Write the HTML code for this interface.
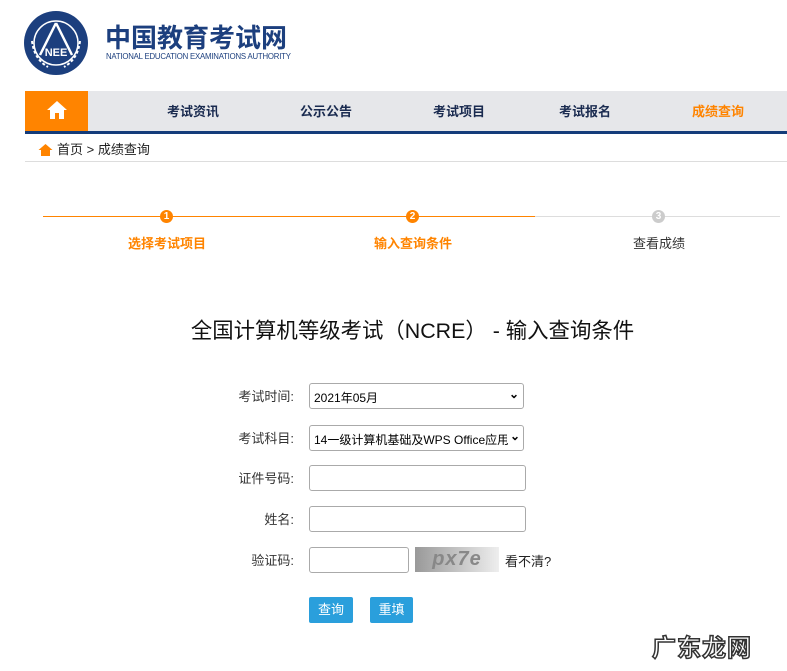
<!DOCTYPE html>
<html><head><meta charset="utf-8"><style>
*{margin:0;padding:0;box-sizing:border-box}
body{width:787px;height:671px;background:#fff;font-family:"Liberation Sans","Noto Sans CJK SC",sans-serif;position:relative;overflow:hidden;color:#333}
.a{position:absolute}
.nav{left:25px;top:91px;width:762px;background:#e6e7ea;border-bottom:3px solid #143c7a;height:43px}
.nav span{position:absolute;top:10px;font-size:13px;font-weight:bold;color:#1a2b50}
.lbl{position:absolute;right:493px;font-size:13px;color:#333}
.box{position:absolute;left:309px;border:1px solid #aaa;border-radius:3px;background:#fff;height:26px}
.sel{font-size:12px;color:#000;padding:5px 4px}
.btn{position:absolute;top:597px;height:26px;background:#2a9fdc;color:#fff;font-size:13px;border-radius:2px;text-align:center;line-height:26px}
</style></head><body>
<svg class="a" style="left:24px;top:11px" width="64" height="64" viewBox="0 0 64 64">
<circle cx="32" cy="32" r="32" fill="#1c3f7e"/>
<circle cx="32" cy="32" r="22" fill="none" stroke="#fff" stroke-width="1.5"/>
<path d="M32 12 L16 44 M32 12 L48 44" stroke="#fff" stroke-width="2.5" fill="none"/>
<text x="32" y="45" font-size="11" fill="#fff" text-anchor="middle" font-family="Liberation Sans" font-weight="bold">NEE</text>
<path d="M8 30 Q10 48 24 56 M56 30 Q54 48 40 56" stroke="#fff" stroke-width="2" fill="none" stroke-dasharray="3 2"/>
</svg>
<div class="a" style="left:105px;top:18px;font-size:26px;font-weight:bold;color:#1c3f7e;letter-spacing:0px">中国教育考试网</div>
<div class="a" style="left:106px;top:52px;font-size:7.8px;color:#1c3f7e;letter-spacing:-0.2px">NATIONAL EDUCATION EXAMINATIONS AUTHORITY</div>
<div class="a nav">
<div class="a" style="left:0;top:0;width:63px;height:40px;background:#ff8400"></div>
<svg class="a" style="left:21px;top:9px" width="22" height="20" viewBox="0 0 22 20"><path d="M11 1 L1 10 H4 V19 H9 V13 H13 V19 H18 V10 H21 Z" fill="#fff"/></svg>
<span style="left:142px">考试资讯</span><span style="left:275px">公示公告</span><span style="left:408px">考试项目</span><span style="left:534px">考试报名</span><span style="left:667px;color:#ff8400">成绩查询</span>
</div>
<svg class="a" style="left:38px;top:143px" width="15" height="14" viewBox="0 0 15 14"><path d="M7.5 1 L0.5 7 H3 V13 H12 V7 H14.5 Z" fill="#ff8400"/></svg>
<div class="a" style="left:57px;top:139px;font-size:13px;color:#222">首页 &gt; 成绩查询</div>
<div class="a" style="left:25px;top:161px;width:762px;height:1px;background:#ddd"></div>
<div class="a" style="left:43px;top:216px;width:492px;height:1px;background:#ff8400"></div>
<div class="a" style="left:535px;top:216px;width:245px;height:1px;background:#ddd"></div>
<div class="a" style="left:160px;top:210px;width:13px;height:13px;border-radius:50%;background:#ff8400;color:#fff;font-size:10px;text-align:center;line-height:13px;font-weight:bold">1</div>
<div class="a" style="left:406px;top:210px;width:13px;height:13px;border-radius:50%;background:#ff8400;color:#fff;font-size:10px;text-align:center;line-height:13px;font-weight:bold">2</div>
<div class="a" style="left:652px;top:210px;width:13px;height:13px;border-radius:50%;background:#ccc;color:#fff;font-size:10px;text-align:center;line-height:13px;font-weight:bold">3</div>
<div class="a" style="left:128px;top:233px;font-size:13px;color:#ff8400;font-weight:bold">选择考试项目</div>
<div class="a" style="left:374px;top:233px;font-size:13px;color:#ff8400;font-weight:bold">输入查询条件</div>
<div class="a" style="left:633px;top:233px;font-size:13px;color:#333">查看成绩</div>
<div class="a" style="left:0;width:825px;top:314px;text-align:center;font-size:21.4px;color:#111">全国计算机等级考试（NCRE） - 输入查询条件</div>
<div class="lbl" style="top:386px">考试时间:</div>
<div class="lbl" style="top:428px">考试科目:</div>
<div class="lbl" style="top:468px">证件号码:</div>
<div class="lbl" style="top:509px">姓名:</div>
<div class="lbl" style="top:550px">验证码:</div>
<div class="box sel" style="top:383px;width:215px">2021年05月<span style="position:absolute;right:4px;top:3px;font-weight:bold">⌄</span></div>
<div class="box sel" style="top:425px;width:215px;white-space:nowrap;overflow:hidden">14一级计算机基础及WPS Office应用<span style="position:absolute;right:0;top:3px;background:#fff;font-weight:bold;padding:0 3px">⌄</span></div>
<div class="box" style="top:465px;width:217px"></div>
<div class="box" style="top:506px;width:217px"></div>
<div class="box" style="top:547px;width:100px"></div>
<div class="a" style="left:415px;top:547px;width:84px;height:25px;background:linear-gradient(90deg,#999,#eee);font-size:20px;font-weight:bold;color:#888;text-align:center;line-height:25px;letter-spacing:1px;font-style:italic">px7e</div>
<div class="a" style="left:505px;top:551px;font-size:13px;color:#222">看不清?</div>
<div class="btn" style="left:309px;width:44px">查询</div>
<div class="btn" style="left:370px;width:43px">重填</div>
<div class="a" style="left:652px;top:628px;font-size:24px;font-weight:bold;color:#fff;-webkit-text-stroke:1.5px #333;letter-spacing:1px">广东龙网</div>
</body></html>
